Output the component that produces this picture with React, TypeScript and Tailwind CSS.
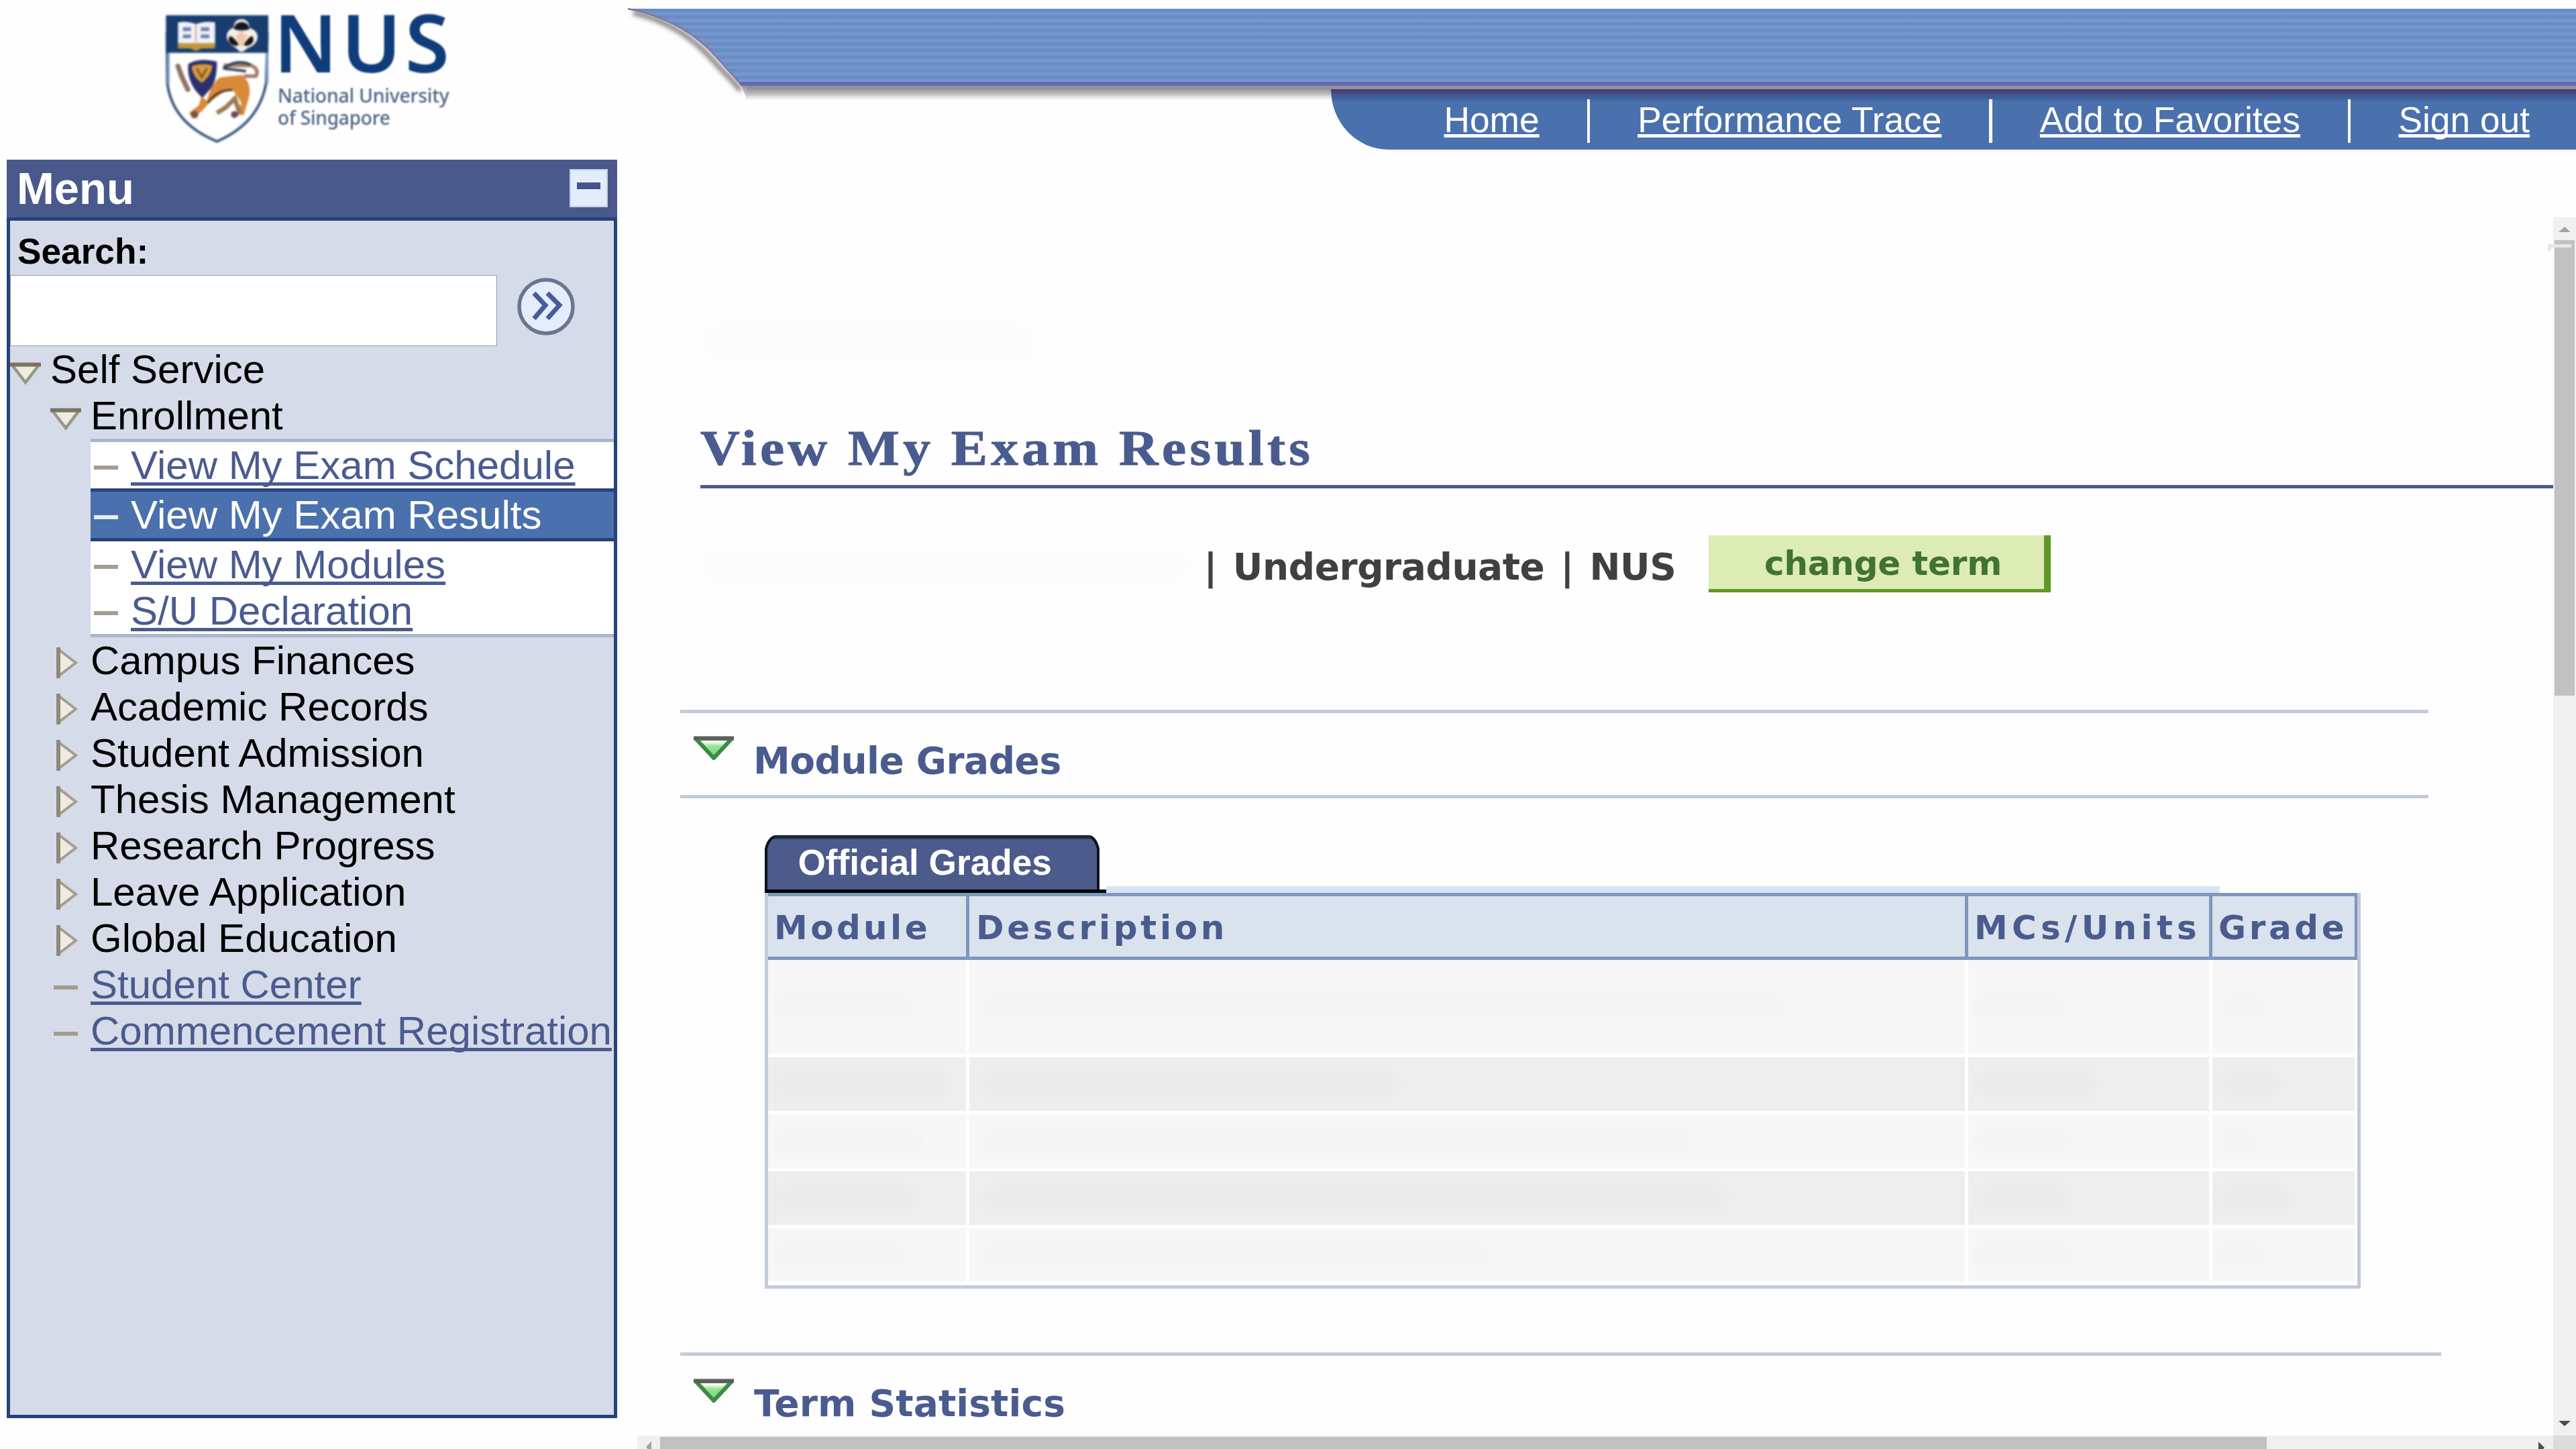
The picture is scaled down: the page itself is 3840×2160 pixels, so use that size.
const crestTrefoil = "M480 85c-22 0-36 16-34 38-24 6-38 28-30 52 8 22 28 30 42 42 6 8 14 14 22 14s16-6 24-14c16-8 38-16 46-40 8-24-8-46-34-52 0-24-14-40-36-40z";

function Crest() {
  return (
    <svg viewBox="135 60 480 590" className="h-[197px] w-[160px] shrink-0 blur-[1.5px]">
      <path d="M146 150L148 370Q170 550 370 632Q560 550 590 370L596 150Z" fill="#fff" stroke="#2b4a78" strokeWidth="11" />
      <path d="M152 235V375M594 235V375" stroke="#6d93be" strokeWidth="12" />
      <path d="M142 68H600V236H142Z" fill="#173c70" />
      <path d="M196 100Q240 92 276 108Q315 92 362 100V196H196Z" fill="#f1f2f8" />
      <path d="M196 192H362V216H300L276 228L252 216H196Z" fill="#c2953f" />
      <path d="M276 104V188" stroke="#e49a8c" strokeWidth="6" />
      <path d="M218 122h36v16h-36zM218 154h36v16h-36zM298 122h38v16h-38zM298 154h38v16h-38z" fill="#6a7fb0" />
      <path d={crestTrefoil} fill="#f4efe8" />
      <path d="M446 130Q450 100 480 98Q512 100 516 130Q480 142 446 130Z" fill="#15161c" />
      <path d="M428 160Q450 168 468 200Q450 212 430 194Q416 180 428 160Z" fill="#1a1213" />
      <path d="M528 160Q508 168 490 200Q508 212 526 194Q540 180 528 160Z" fill="#1a1213" />
      <path d="M480 138L506 160L480 215L454 160Z" fill="#f0c8a8" />
      <path d="M242 285Q290 255 370 275Q372 370 330 410L305 438L275 405Q235 350 242 285Z" fill="#2a2f70" />
      <path d="M256 296Q300 278 350 292Q345 340 302 370Q262 345 256 296Z" fill="#d89a3c" />
      <path d="M280 305L302 345L325 305" fill="none" stroke="#7a5a2c" strokeWidth="9" />
      <path d="M196 295L212 340L240 400" fill="none" stroke="#8d7266" strokeWidth="22" strokeLinecap="round" />
      <path d="M325 450Q345 370 385 345L480 335Q530 370 512 440L490 515L455 510L480 460L440 400L400 410L340 455L300 500L260 522L245 505L290 470L300 430Z" fill="#d8893a" />
      <path d="M330 460Q370 400 440 402" fill="none" stroke="#4a3426" strokeWidth="9" />
      <path d="M370 505L410 480L450 440L470 500L445 520" fill="none" stroke="#9a7a50" strokeWidth="20" />
      <path d="M490 340H545Q560 310 525 292H400" fill="none" stroke="#a77c66" strokeWidth="16" />
      <path d="M398 305Q460 262 520 288M398 305L500 318" fill="none" stroke="#2e3b52" strokeWidth="11" />
      <circle cx="270" cy="512" r="17" fill="#7d5240" />
      <circle cx="448" cy="512" r="15" fill="#6b4a52" />
    </svg>
  );
}

function Logo() {
  return (
    <div className="flex w-[938px] shrink-0 pt-[10px] pl-[245px]">
      <div className="mt-[10px] h-[197px]"><Crest /></div>
      <div className="flex w-[300px] flex-col whitespace-nowrap font-['Noto_Sans']">
        <div className="ml-[3px] h-[112px] text-[120px] leading-[103px] font-semibold tracking-[5.5px] text-[#0f3d7c] blur-[0.8px]">NUS</div>
        <div className="ml-[9px] h-[33px] text-[28.3px] leading-[40px] font-medium tracking-[-0.2px] text-[#4d6485] blur-[0.8px]">National University</div>
        <div className="ml-[9px] text-[28px] leading-[40px] font-medium tracking-[-0.2px] text-[#4d6485] blur-[0.8px]">of Singapore</div>
      </div>
    </div>
  );
}

/* Sloped left end of the ribbon with its drop shadow */
function RibbonEnd() {
  return (
    <svg viewBox="0 0 180 135" className="h-[135px] w-[180px] shrink-0 overflow-visible">
      <defs>
        <linearGradient id="stripe" x1="0" y1="0" x2="0" y2="10" gradientUnits="userSpaceOnUse" spreadMethod="repeat">
          <stop offset="0" stopColor="#6b8fc6" />
          <stop offset="0.2" stopColor="#678bc3" />
          <stop offset="0.3" stopColor="#678bc3" />
          <stop offset="0.7" stopColor="#7799cf" />
          <stop offset="0.8" stopColor="#7799cf" />
          <stop offset="1" stopColor="#6b8fc6" />
        </linearGradient>
        <linearGradient id="drop" x1="0" y1="0" x2="0" y2="1">
          <stop offset="0" stopColor="#949097" />
          <stop offset="1" stopColor="#e9e9e9" />
        </linearGradient>
        <filter id="soft" x="-10%" y="-10%" width="120%" height="120%"><feGaussianBlur stdDeviation="3.5" /></filter>
      </defs>
      <path d="M6 6C56 16 98 46 124 76C142 96 156 108 166 122" fill="none" stroke="#6b6368" strokeWidth="6" filter="url(#soft)" />
      <path d="M167 114H180V135H175Z" fill="url(#drop)" />
      <path d="M-2 0C52 10 98 36 128 70C146 90 158 102 168 115H180V0Z" fill="url(#stripe)" />
      <path d="M-2 0C52 10 98 36 128 70C146 90 158 102 168 115" fill="none" stroke="#7f779c" strokeWidth="2.5" />
      <path d="M164 109H180V115H168Z" fill="#6469b0" />
    </svg>
  );
}

function NavBar() {
  const links = ["Home", "Performance Trace", "Add to Favorites", "Sign out"];
  return (
    <div className="flex h-[90px] flex-1 items-start justify-end rounded-bl-[86px_90px] bg-[linear-gradient(to_bottom,#463a72_0px,#47427c_4px,#405a92_9px,#3e609c_13px,#4a70ad_19px)] pr-[69px]">
      {links.map((label, i) => (
        <div key={label} className="flex">
          {i > 0 && <div className="mx-[71px] mt-[15px] h-[65px] w-[4.5px] bg-white" />}
          <a className="text-[53.3px] leading-[91px] text-white underline decoration-[5px] underline-offset-[3px] [text-decoration-skip-ink:none]">{label}</a>
        </div>
      ))}
    </div>
  );
}

function Ribbon() {
  return (
    <div className="flex flex-1 pt-[13px]">
      <RibbonEnd />
      <div className="ml-[-5px] flex flex-1 flex-col">
        <div className="h-[109px] bg-[repeating-linear-gradient(to_bottom,#6b8fc6_0px,#678bc3_2px,#678bc3_3px,#7799cf_7px,#7799cf_8px,#6b8fc6_10px)]" />
        <div className="h-[6px] bg-[#6469b0]" />
        <div className="h-[5px] bg-[#949099]" />
        <div className="flex">
          <div className="h-[15px] w-[871px] bg-[linear-gradient(to_bottom,#98969b,#c4c4c4_55%,#e8e8e8_80%,#e9e9e9)]" />
          <NavBar />
        </div>
      </div>
    </div>
  );
}

function DownTriangle() {
  return (
    <svg viewBox="0 0 46 34" className="h-[34px] w-[46px] shrink-0 blur-[0.6px]">
      <path d="M3 4H43L23 30Z" fill="#eeece0" stroke="#9c9686" strokeWidth="4.5" />
      <path d="M0 3.5H46" stroke="#7a7464" strokeWidth="6" />
    </svg>
  );
}

function RightTriangle() {
  return (
    <svg viewBox="0 0 34 46" className="h-[46px] w-[34px] shrink-0 blur-[0.6px]">
      <path d="M4 3L30 23L4 43Z" fill="#eeece0" stroke="#a39e8f" strokeWidth="4" />
      <path d="M4 0V46" stroke="#8f897a" strokeWidth="6" />
    </svg>
  );
}

const linkStyle = "text-[#4a5b8f] underline decoration-[5px] underline-offset-[5px] [text-decoration-skip-ink:none]";

function SubItem({ label, active }: { label: string; active?: boolean }) {
  return (
    <div className={active ? "flex h-[79px] border-y-[5px] border-[#27427a] bg-[#4a70ad] text-white" : "flex h-[69px] bg-white"}>
      <div className={active ? "mt-[35px] mr-[19px] ml-[5px] h-[6px] w-[36px] bg-[#e6effc]" : "mt-[35px] mr-[19px] ml-[5px] h-[6px] w-[36px] bg-[#a39d8c]"} />
      <span className={active ? "" : linkStyle}>{label}</span>
    </div>
  );
}

function Sidebar() {
  const folders = ["Campus Finances", "Academic Records", "Student Admission", "Thesis Management", "Research Progress", "Leave Application", "Global Education"];
  const pages = ["Student Center", "Commencement Registration"];
  return (
    <aside className="ml-[10px] h-[1876px] w-[910px] shrink-0 bg-[#d5dbe9]">
      <div className="flex h-[86px] items-start justify-between bg-[#4a598b] pr-[14px] pl-[15px]">
        <h2 className="text-[67px] leading-[86px] font-bold text-white">Menu</h2>
        <div className="mt-[14px] flex h-[57px] w-[57px] items-start justify-center border-[2px] border-[#c4d0e6] bg-[#e3ecfb] pt-[18px]">
          <div className="h-[10px] w-[35px] bg-[#43538f]" />
        </div>
      </div>
      <div className="h-[1790px] border-[5px] border-[#27427a] text-[60px] leading-[69px] whitespace-nowrap text-black">
        <div className="h-[81px] pt-[10px] pl-[11px] text-[53.2px] leading-[71px] font-bold">Search:</div>
        <div className="flex h-[106px] items-start">
          <div className="h-[106px] w-[726px] border border-[#999] bg-white" />
          <svg viewBox="0 0 88 88" className="mt-[3px] ml-[29px] h-[88px] w-[88px] blur-[0.6px]">
            <circle cx="44" cy="44" r="40" fill="#e3edfc" stroke="#6c7590" strokeWidth="5.5" />
            <path d="M26 24L43 42L26 62M46 24L64 42L46 62" fill="none" stroke="#4a5b9a" strokeWidth="7" />
          </svg>
        </div>
        <div className="flex h-[69px]">
          <div className="mt-[24px] mr-[14px] h-[34px]"><DownTriangle /></div>
          <span>Self Service</span>
        </div>
        <div className="flex h-[69px] pl-[60px]">
          <div className="mt-[23px] mr-[14px] h-[34px]"><DownTriangle /></div>
          <span>Enrollment</span>
        </div>
        <div className="ml-[120px] border-y-[5px] border-[#a9b6d0]">
          <SubItem label="View My Exam Schedule" />
          <SubItem label="View My Exam Results" active />
          <SubItem label="View My Modules" />
          <SubItem label="S/U Declaration" />
        </div>
        {folders.map((label) => (
          <div key={label} className="flex h-[69px] pl-[68px]">
            <div className="mt-[15px] mr-[18px]"><RightTriangle /></div>
            <span>{label}</span>
          </div>
        ))}
        {pages.map((label) => (
          <div key={label} className="flex h-[69px] pl-[65px]">
            <div className="mt-[36px] mr-[19px] h-[6px] w-[36px] bg-[#a39d8c]" />
            <span className={linkStyle}>{label}</span>
          </div>
        ))}
      </div>
    </aside>
  );
}

function GreenTriangle() {
  return (
    <svg viewBox="0 0 64 38" className="h-[38px] w-[64px] shrink-0 blur-[0.6px]">
      <defs>
        <linearGradient id="leaf" x1="0" y1="0" x2="0" y2="1">
          <stop offset="0.15" stopColor="#ffffff" />
          <stop offset="0.4" stopColor="#93e493" />
          <stop offset="1" stopColor="#6fd27a" />
        </linearGradient>
      </defs>
      <path d="M5 5H59L32 34Z" fill="url(#leaf)" stroke="#3f8a48" strokeWidth="6" strokeLinejoin="round" />
      <path d="M2 4.5H62" stroke="#5e5e5e" strokeWidth="6" />
    </svg>
  );
}

const columns = [
  { label: "Module", head: "pl-[9px] tracking-[4.4px]" },
  { label: "Description", head: "pl-[10px] tracking-[4.7px]" },
  { label: "MCs/Units", head: "pl-[9px] tracking-[6.3px]" },
  { label: "Grade", head: "pl-[9px] tracking-[4.6px]" },
];
const rows = [
  { cell: "bg-[#f7f7f7] h-[140px]", smudges: ["ml-[10px] w-[210px]", "ml-[20px] w-[1200px]", "ml-[12px] w-[130px]", "ml-[12px] w-[70px]"] },
  { cell: "bg-[#eeeeee] h-[80px]", smudges: ["ml-[10px] w-[260px]", "ml-[20px] w-[620px]", "ml-[12px] w-[180px]", "ml-[12px] w-[90px]"] },
  { cell: "bg-[#f7f7f7] h-[80px]", smudges: ["ml-[10px] w-[220px]", "ml-[20px] w-[1060px]", "ml-[12px] w-[140px]", "ml-[12px] w-[55px]"] },
  { cell: "bg-[#eeeeee] h-[80px]", smudges: ["ml-[10px] w-[210px]", "ml-[20px] w-[1110px]", "ml-[12px] w-[140px]", "ml-[6px] w-[110px]"] },
  { cell: "bg-[#f7f7f7] h-[80px]", smudges: ["ml-[10px] w-[200px]", "ml-[20px] w-[760px]", "ml-[12px] w-[150px]", "ml-[6px] w-[80px]"] },
];
const grid = "grid grid-cols-[295px_1484px_359px_212px] gap-x-[5px]";

function GradesTable() {
  return (
    <div className="flex h-[590px] w-[2379px] flex-col border-x-[5px] border-b-[5px] border-[#c2cadb] bg-white">
      <div className="h-[100px] border-y-[5px] border-r-[5px] border-[#7d97bd] bg-[#7d97bd]">
        <div className={"h-[90px] font-['DejaVu_Sans'] text-[50px] font-bold whitespace-nowrap text-[#4a5b8f] " + grid}>
          {columns.map((c) => (
            <div key={c.label} className={"h-[90px] overflow-hidden bg-[#dae2ed] pt-[5px] leading-[85px] " + c.head}>{c.label}</div>
          ))}
        </div>
      </div>
      <div className="flex flex-col gap-[5px]">
        {rows.map((row, i) => (
          <div key={i} className={grid}>
            {row.smudges.map((s, j) => (
              <div key={j} className={"flex items-center " + row.cell}>
                <div className={"h-[40px] rounded-full bg-black/[0.01] blur-[7px] " + s} />
              </div>
            ))}
          </div>
        ))}
      </div>
    </div>
  );
}

function SectionTitle({ label, tight }: { label: string; tight?: boolean }) {
  return (
    <div className="flex h-[122px] pl-[18px]">
      <div className="mt-[33px] h-[38px]"><GreenTriangle /></div>
      <h3 className={"pt-[20px] font-['DejaVu_Sans'] text-[55px] leading-[102px] font-bold whitespace-nowrap text-[#4a5b8f] " + (tight ? "pl-[27px] tracking-[-0.5px]" : "pl-[28px] tracking-[0.1px]")}>{label}</h3>
    </div>
  );
}

function Content() {
  return (
    <main className="ml-[30px] h-[1902px] w-[2856px] shrink-0 overflow-hidden">
      <div className="h-[362px] pt-[240px] pl-[96px]">
        <div className="h-[64px] w-[500px] rounded-full bg-[#fcfcfd] blur-[6px]" />
      </div>
      <div className="ml-[94px] h-[128px] border-b-[5px] border-[#4a5b89] pt-[13px]">
        <h1 className="origin-left scale-x-110 font-['Liberation_Serif'] text-[74px] leading-[110px] font-bold tracking-[4.8px] whitespace-nowrap text-[#4a5b8f] [-webkit-text-stroke:1px_#4a5b8f]">View My Exam Results</h1>
      </div>
      <div className="mt-[70px] flex h-[85px] font-['DejaVu_Sans'] font-bold whitespace-nowrap">
        <div className="mt-[16px] ml-[94px] h-[60px] w-[730px] rounded-full bg-[#fcfcfc] blur-[6px]" />
        <div className="ml-[20.5px] w-[752.5px] text-[55px] leading-[94px] tracking-[-0.45px] text-[#404040] [word-spacing:5px]">| Undergraduate | NUS</div>
        <div className="h-[85px] w-[510px] border-r-[10px] border-b-[5px] border-r-[#5f9827] border-b-[#5f9827] bg-[#ddebb5] pl-[83px] text-[50px] leading-[85px] tracking-[-0.2px] text-[#407335]">change term</div>
      </div>
      <div className="mt-[175px] ml-[64px] w-[2606px] border-y-[5px] border-[#c3cad9]">
        <SectionTitle label="Module Grades" tight />
      </div>
      <div className="mt-[55px] ml-[190px]">
        <div className="flex h-[86px] items-end">
          <div className="relative h-[86px] w-[509px]">
            <svg viewBox="0 0 509 86" className="absolute inset-0 h-[86px] w-[509px]">
              <path d="M2 86V20Q6 4 16 2H484Q493 4 497 20V86Z" fill="#4c5b8c" stroke="#0c1420" strokeWidth="4" />
              <path d="M14 3H486" stroke="#1f2c40" strokeWidth="5" />
              <path d="M0 83.5H509" stroke="#000" strokeWidth="5" />
            </svg>
            <span className="relative block pl-[49.5px] text-[53.2px] leading-[81px] font-bold whitespace-nowrap text-white">Official Grades</span>
          </div>
          <div className="h-[10px] w-[1660px] bg-[#d7e4f4]" />
        </div>
        <GradesTable />
      </div>
      <div className="mt-[95px] ml-[64px] w-[2625px] border-t-[5px] border-[#c3cad9]">
        <SectionTitle label="Term Statistics" />
      </div>
    </main>
  );
}

function VerticalScrollbar() {
  return (
    <div className="mt-[86px] flex h-[1816px] w-[34px] shrink-0 flex-col items-center bg-[#f0f0f0]">
      <svg viewBox="0 0 18 8" className="mt-[14px] h-[8px] w-[18px]"><path d="M0 8L9 0L18 8Z" fill="#a3a3a3" /></svg>
      <div className="relative mt-[12px] h-[679px] w-[30px] bg-[#c1c1c1]">
        <div className="absolute top-[6px] left-[-10px] h-[10px] w-[35px] border-t-[5px] border-l-[5px] border-[#e8e8e8]" />
      </div>
      <svg viewBox="0 0 18 8" className="mt-auto mb-[14px] h-[8px] w-[18px]"><path d="M0 0L9 8L18 0Z" fill="#4d4d4d" /></svg>
    </div>
  );
}

function HorizontalScrollbar() {
  return (
    <div className="flex h-[20px] pl-[950px]">
      <div className="flex h-[20px] w-[2856px] items-start overflow-hidden bg-[#f0f0f0]">
        <svg viewBox="0 0 8 18" className="mt-[8px] ml-[13px] h-[18px] w-[8px]"><path d="M8 0L0 9L8 18Z" fill="#a3a3a3" /></svg>
        <div className="mt-[2px] ml-[13px] h-[18px] w-[2395px] bg-[#c1c1c1]" />
        <svg viewBox="0 0 9 18" className="mt-[9px] mr-[13px] ml-auto h-[18px] w-[9px]"><path d="M0 0L9 9L0 18Z" fill="#4d4d4d" /></svg>
      </div>
      <div className="h-[20px] w-[34px] bg-[#dbdbdb]" />
    </div>
  );
}

export default function App() {
  return (
    <div className="flex h-[2160px] w-[3840px] flex-col overflow-hidden bg-[#fefefe] font-['Liberation_Sans',sans-serif]">
      <header className="flex h-[238px] shrink-0">
        <Logo />
        <Ribbon />
      </header>
      <div className="flex h-[1902px] shrink-0">
        <Sidebar />
        <Content />
        <VerticalScrollbar />
      </div>
      <HorizontalScrollbar />
    </div>
  );
}
